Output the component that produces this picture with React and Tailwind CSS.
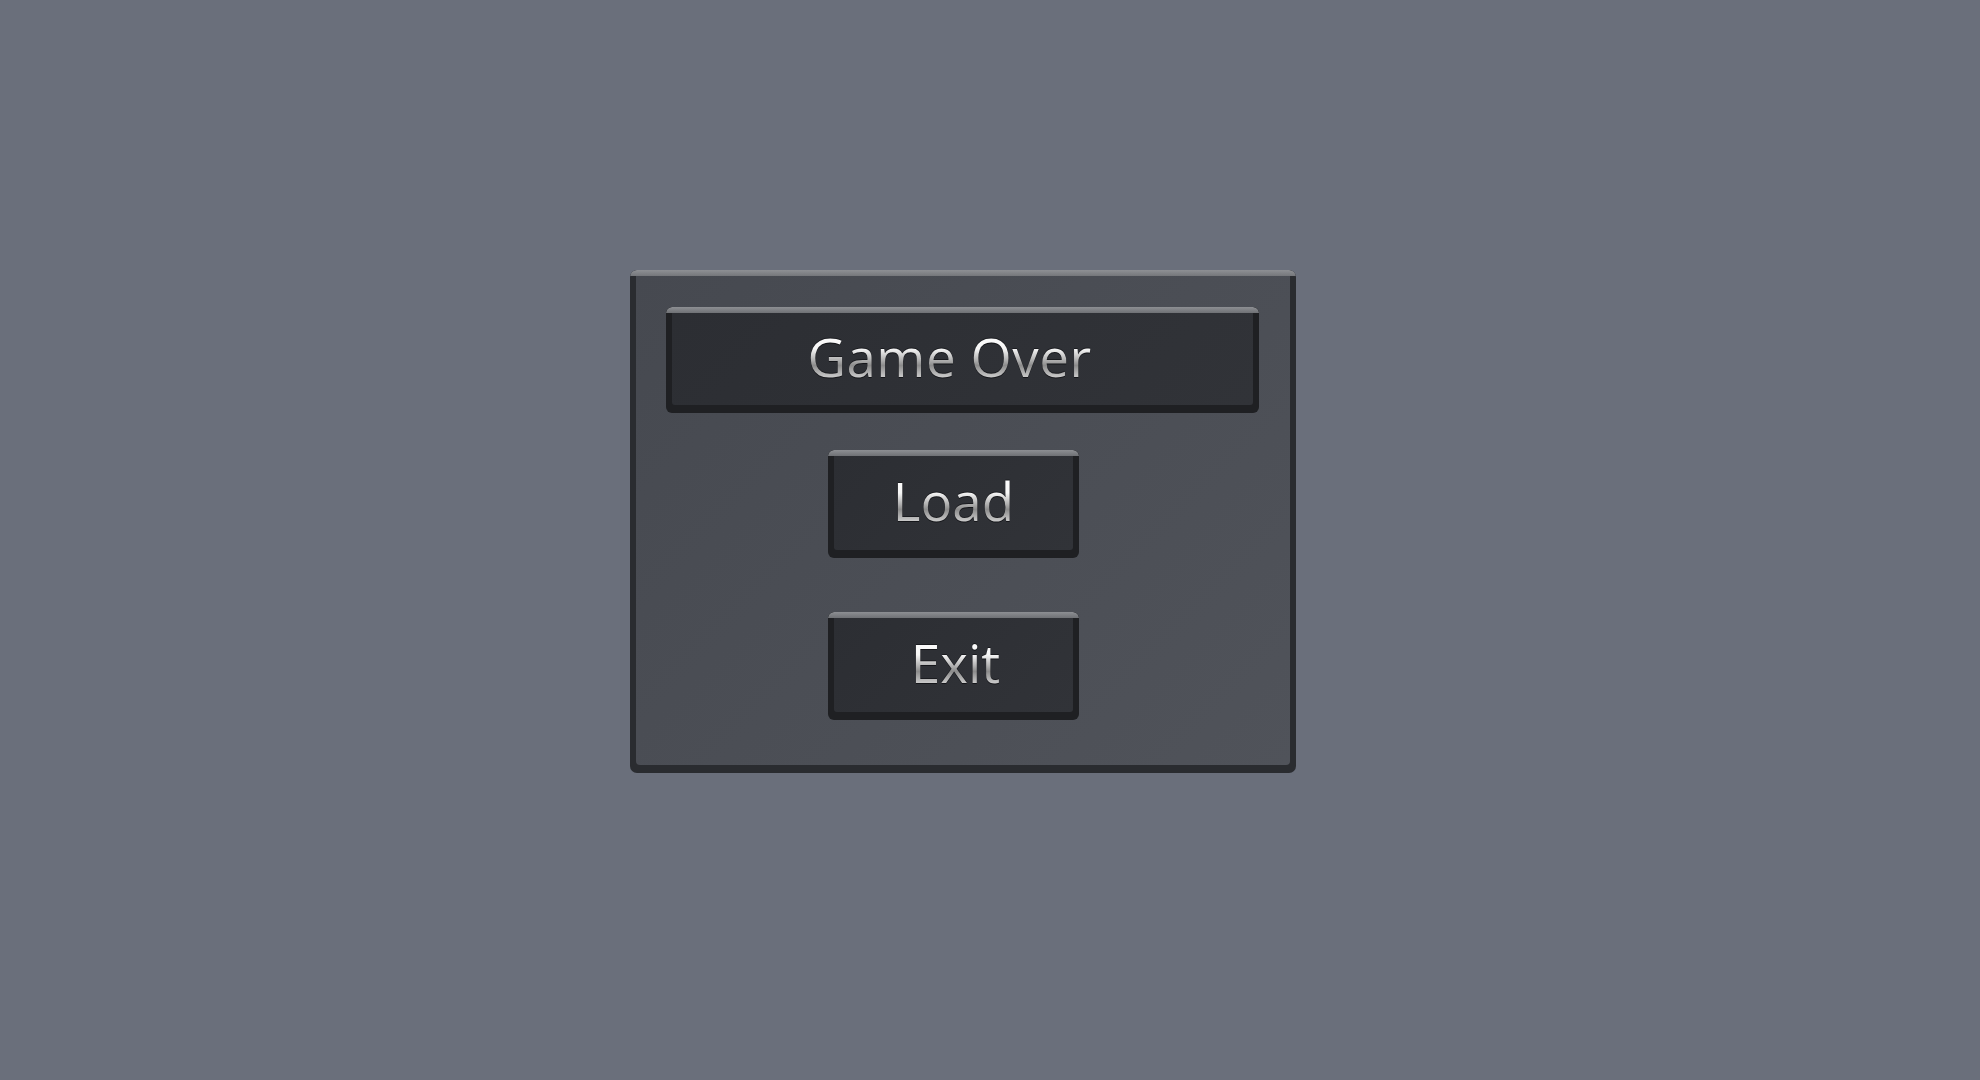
import React from "react";

// texto metalizado (gradiente recortado al texto)
const chrome =
  "bg-[linear-gradient(180deg,#ffffff_0%,#f6f6f6_32%,#b4b4b4_50%,#8c8c8c_60%,#d6d6d6_84%,#ffffff_100%)] bg-clip-text text-transparent [filter:drop-shadow(0_1px_0_#15161a)_drop-shadow(0_-1px_0_#1b1c20)]";

function Slab({ className = "", children }) {
  // bloque con borde superior claro y laterales/inferior oscuros
  return (
    <div className={`flex flex-col rounded-[6px] bg-[#1f2023] overflow-hidden ${className}`}>
      <div className="h-[6px] shrink-0 bg-[linear-gradient(180deg,#8d8f93,#6f7175)] rounded-t-[6px]" />
      <div className="flex-1 mx-[6px] mb-[8px] rounded-b-[3px] bg-[linear-gradient(135deg,#2c2e33,#313338)] flex items-center justify-center">
        {children}
      </div>
    </div>
  );
}

export default function App() {
  return (
    <div
      className="min-h-screen bg-[#6a6f7b] pt-[270px] pl-[630px]"
      style={{ fontFamily: '"Open Sans", "Noto Sans", sans-serif' }}
    >
      {/* Panel principal */}
      <div className="w-[666px] h-[503px] flex flex-col rounded-[7px] bg-[#2a2c30] overflow-hidden">
        <div className="h-[6px] shrink-0 bg-[linear-gradient(180deg,#8e9094,#75777b)] rounded-t-[7px]" />
        <div className="flex-1 mx-[6px] mb-[8px] rounded-b-[4px] bg-[linear-gradient(135deg,#464950,#50535a)] flex flex-col px-[30px] pt-[31px]">
          <Slab className="h-[106px] w-[593px]">
            <span className={`text-[53px] leading-none pb-[6px] pr-[26px] tracking-[0.5px] ${chrome}`}>Game Over</span>
          </Slab>
          <Slab className="h-[108px] w-[251px] ml-[162px] mt-[37px]">
            <span className={`text-[53px] leading-none pb-[6px] ${chrome}`}>Load</span>
          </Slab>
          <Slab className="h-[108px] w-[251px] ml-[162px] mt-[54px]">
            <span className={`text-[53px] leading-none pb-[6px] pl-[4px] ${chrome}`}>Exit</span>
          </Slab>
        </div>
      </div>
    </div>
  );
}
